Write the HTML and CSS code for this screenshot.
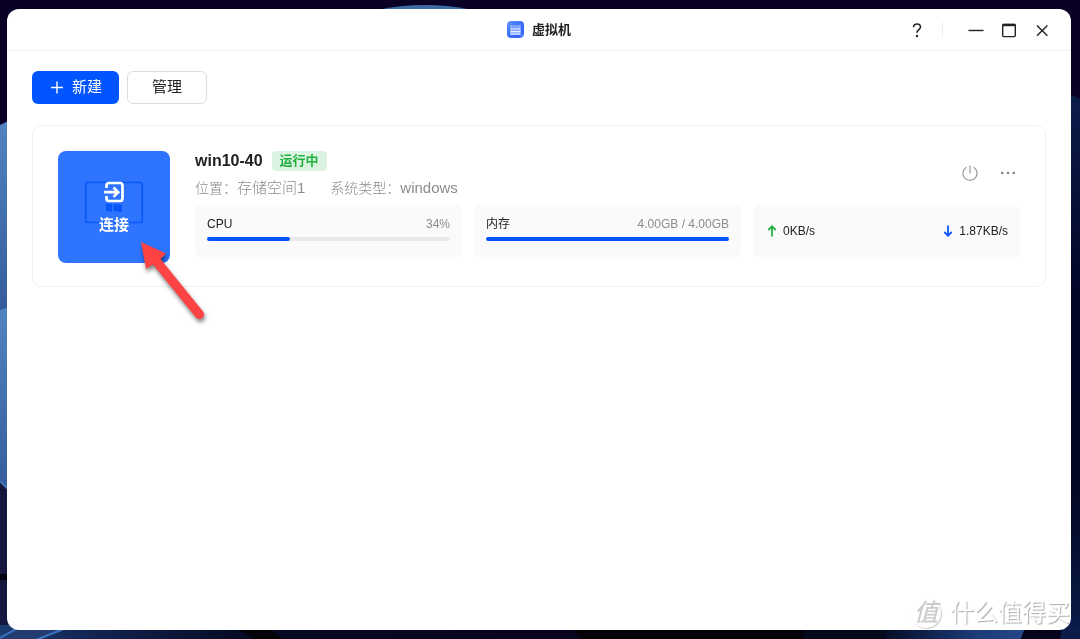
FILE: index.html
```html
<!DOCTYPE html>
<html lang="zh-CN">
<head>
<meta charset="utf-8">
<title>虚拟机</title>
<link rel="stylesheet" href="styles.css">
</head>
<body>
<svg class="wallpaper" viewBox="0 0 1080 639" preserveAspectRatio="none" aria-hidden="true">
  <defs>
    <linearGradient id="petal" x1="0" y1="0" x2="0" y2="1"><stop offset="0" stop-color="#5184c2"/><stop offset="1" stop-color="#355c9c"/></linearGradient>
    <linearGradient id="right" x1="0" y1="0" x2="0" y2="1"><stop offset="0" stop-color="#0c1c4a"/><stop offset=".35" stop-color="#02072a"/><stop offset=".7" stop-color="#020620"/><stop offset="1" stop-color="#0a1c4a"/></linearGradient>
    <linearGradient id="floor" x1="0" y1="0" x2="1" y2="0"><stop offset="0" stop-color="#1c3d70"/><stop offset=".1" stop-color="#122452"/><stop offset=".27" stop-color="#060b25"/><stop offset=".6" stop-color="#080320"/><stop offset=".8" stop-color="#04081c"/><stop offset="1" stop-color="#04081c"/></linearGradient>
    <linearGradient id="glow" x1="0" y1="0" x2="1" y2="0"><stop offset="0" stop-color="#050d28"/><stop offset=".65" stop-color="#1c3c78"/><stop offset="1" stop-color="#24478a"/></linearGradient>
  </defs>
  <rect width="1080" height="639" fill="#0a0026"/>
  <ellipse cx="425" cy="18" rx="58" ry="13" fill="#3d6ba5"/>
  <path d="M0 125L10 120V310H0z" fill="url(#petal)"/>
  <path d="M0 310L10 307V492L0 480z" fill="url(#petal)"/>
  <path d="M0 481L10 491V639H0z" fill="#15173f"/>
  <path d="M0 481L10 491" stroke="#4478bd" stroke-width="2"/>
  <path d="M0 574H10V580H0z" fill="#02020e"/>
  <path d="M1068 95Q1076 96 1080 99V639H1068z" fill="url(#right)"/>
  <rect y="625" width="886" height="14" fill="url(#floor)"/>
  <path d="M0 639L18 628H65L38 639z" fill="#233d70"/>
  <path d="M0 638L18 628M36 640L66 628" stroke="#3c74c5" stroke-width="2"/>
  <path d="M235 628H270L282 639H255zM572 628H804V639H582z" fill="#020208"/>
  <path d="M886 628H1025L1021 639H887z" fill="url(#glow)"/>
  <path d="M1025 628H1062L1060 639H1021z" fill="#05031c"/>
  <path d="M1062 628H1080V639H1060z" fill="#0b1c4b"/>
</svg>

<main class="window">
  <header class="titlebar">
    <h1 class="app-title">
      <svg width="17" height="17" viewBox="0 0 17 17" aria-hidden="true">
        <defs><linearGradient id="logo" x1="0" y1="0" x2="1" y2="1"><stop offset="0" stop-color="#6d9dff"/><stop offset=".3" stop-color="#437bf8"/><stop offset=".8" stop-color="#3563f5"/><stop offset="1" stop-color="#8caeff"/></linearGradient></defs>
        <rect width="17" height="17" rx="4" fill="url(#logo)"/>
        <rect x="4" y="4" width="9" height="9" fill="#7da3ff"/>
        <path d="M4 4v9.500M13 4v9.500" stroke="#a9c4ff"/>
        <path d="M3.500 8h10M3.500 10.600h10M3.500 13.200h10" stroke="#e8f0ff" stroke-width="1.200"/>
      </svg>
      <span>虚拟机</span>
    </h1>
    <div class="window-controls">
      <button class="control" aria-label="帮助"><svg width="16" height="18" viewBox="0 0 16 18"><path d="M4.500 6.300C4.500 4.100 5.800 3 8 3s3.500 1.200 3.500 3c0 2.500-3.500 2.800-3.500 5.700" stroke-width="1.600"/><circle cx="8" cy="15" r="1.200" class="dot"/></svg></button>
      <span class="divider"></span>
      <button class="control" aria-label="最小化"><svg width="16" height="18" viewBox="0 0 16 18"><path d="M.500 9.500h15" stroke-width="1.400"/></svg></button>
      <button class="control" aria-label="最大化"><svg width="16" height="18" viewBox="0 0 16 18"><rect x="1.700" y="3.400" width="12.600" height="12.200" rx="1" stroke-width="1.400"/><path d="M1.500 4h13" stroke-width="2.400"/></svg></button>
      <button class="control" aria-label="关闭"><svg width="16" height="18" viewBox="0 0 16 18"><path d="M3 4.400l10.400 10.400M13.400 4.400L3 14.800" stroke-width="1.400"/></svg></button>
    </div>
  </header>

  <div class="content">
    <div class="toolbar">
      <button class="btn btn-primary"><svg width="14" height="14" viewBox="0 0 14 14" aria-hidden="true"><path d="M1 7.500h12M7 1.500v12" stroke="#fff" stroke-width="1.400"/></svg>新建</button>
      <button class="btn btn-plain">管理</button>
    </div>

    <article class="card">
      <button class="connect">
        <svg class="connect-art" viewBox="0 0 112 112" aria-hidden="true">
          <rect x="27.800" y="31.500" width="56.500" height="40" rx="2" fill="none" stroke="#0959fa" stroke-width="1.700"/>
          <path d="M48 52.500l6 .500v7.500l-6-.500zM55.500 53l8.500.500v7.500l-8.500-1z" fill="#0758f7"/>
          <path d="M48.500 37V34.500q0-2.500 2.500-2.500h11q2.500 0 2.500 2.500v13q0 2.500-2.500 2.500H51q-2.500 0-2.500-2.500V45M46 41.200h13.500M55.500 36.500L60.200 41.200l-4.700 4.700" fill="none" stroke="#fff" stroke-width="2.700"/>
        </svg>
        <span class="connect-label">连接</span>
      </button>
      <div class="info">
        <div class="summary">
          <div class="identity">
            <div class="name-row"><h2 class="name">win10-40</h2><span class="badge">运行中</span></div>
            <div class="meta">
              <span><span class="meta-label">位置：</span>存储空间1</span>
              <span><span class="meta-label">系统类型：</span>windows</span>
            </div>
          </div>
          <div class="actions">
            <button class="control" aria-label="电源"><svg width="16" height="16" viewBox="0 0 16 16"><path d="M4.500 2.300A7 7 0 1 0 11.500 2.300M8 .500v8" stroke="#999" stroke-width="1.200"/></svg></button>
            <button class="control" aria-label="更多"><svg width="16" height="16" viewBox="0 0 16 16"><g fill="#858585" stroke="none"><circle cx="2.200" cy="8" r="1.300"/><circle cx="8" cy="8" r="1.300"/><circle cx="13.800" cy="8" r="1.300"/></g></svg></button>
          </div>
        </div>
        <div class="metrics">
          <section class="metric">
            <div class="metric-row"><span>CPU</span><span class="muted">34%</span></div>
            <div class="track"><div class="fill" style="width:34%"></div></div>
          </section>
          <section class="metric">
            <div class="metric-row"><span>内存</span><span class="muted">4.00GB / 4.00GB</span></div>
            <div class="track"><div class="fill" style="width:100%"></div></div>
          </section>
          <section class="metric network">
            <span class="rate"><svg width="10" height="12" viewBox="0 0 10 12" aria-hidden="true"><path d="M5 11.500V1.500M1.300 5L5 1.300 8.700 5" fill="none" stroke="#25b046" stroke-width="1.800"/></svg>0KB/s</span>
            <span class="rate"><svg width="10" height="12" viewBox="0 0 10 12" aria-hidden="true"><path d="M5 .500v10M1.300 7L5 10.700 8.700 7" fill="none" stroke="#0b55ff" stroke-width="1.800"/></svg>1.87KB/s</span>
          </section>
        </div>
      </div>
    </article>
  </div>
</main>

<svg class="pointer" width="80" height="96" viewBox="0 0 80 96" aria-hidden="true">
  <path d="M7 8L32 19.500 26.500 25 69 77.500a4.500 4.500 0 0 1-7 6L19 30.500l-7 4.500z" fill="#fd4343"/>
</svg>
<div class="watermark"><span class="watermark-seal">值</span><span>什么值得买</span></div>
</body>
</html>
```

FILE: styles.css
```css
* { box-sizing: border-box; }

body {
  margin: 0;
  min-height: 100vh;
  padding: 9px 9px 9px 7px;
  display: flex;
  background: #0a0026;
  color: #222;
  font-family: "Liberation Sans", "Noto Sans CJK SC", sans-serif;
  font-size: 12px;
}

button {
  margin: 0;
  padding: 0;
  border: 0;
  background: none;
  color: inherit;
  font: inherit;
  cursor: pointer;
}

svg { display: block; flex: none; }
h1, h2 { margin: 0; }

.wallpaper {
  position: fixed;
  inset: 0;
  width: 100%;
  height: 100%;
}

.window {
  position: relative;
  flex: 1;
  background: #fff;
  border-radius: 12px;
  overflow: hidden;
}

.titlebar {
  display: grid;
  grid-template-columns: 1fr auto 1fr;
  align-items: center;
  height: 42px;
  border-bottom: 1px solid #f1f1f1;
}

.app-title {
  grid-column: 2;
  display: flex;
  align-items: center;
  gap: 8px;
  font-size: 13px;
  line-height: 20px;
}

.window-controls {
  display: flex;
  justify-content: flex-end;
  align-items: center;
  gap: 17px;
  padding-right: 21px;
}

.control svg {
  fill: none;
  stroke: #222;
}

.control .dot { fill: #222; stroke: none; }

.divider {
  width: 1px;
  height: 16px;
  margin-right: 8px;
  background: #eee;
}

.content { padding: 20px 25px 24px; }

.toolbar {
  display: flex;
  gap: 8px;
  margin-bottom: 21px;
}

.btn {
  display: flex;
  align-items: center;
  justify-content: center;
  gap: 8px;
  height: 33px;
  border-radius: 6px;
  font-size: 15px;
  line-height: 20px;
}

.btn-primary { padding: 0 17px 2px 18px; background: #0055ff; color: #fff; }
.btn-plain { padding: 0 24px 2px; border: 1px solid #ddd; }

.card {
  display: flex;
  gap: 25px;
  padding: 25px 25px 23px;
  border: 1px solid #f1f1f1;
  border-radius: 9px;
}

.connect {
  display: grid;
  flex: none;
  width: 112px;
  height: 112px;
  border-radius: 8px;
  background: #2e74ff;
  color: #fff;
}

.connect-art, .connect-label { grid-area: 1 / 1; }
.connect-art { width: 100%; height: 100%; }

.connect-label {
  align-self: end;
  padding-bottom: 28px;
  font-size: 15px;
  font-weight: 700;
  line-height: 20px;
}

.info { flex: 1; min-width: 0; }

.summary {
  display: flex;
  justify-content: space-between;
  align-items: center;
  margin-bottom: 7px;
}

.name-row {
  display: flex;
  align-items: center;
  gap: 9px;
  margin-bottom: 7px;
}

.name { font-size: 16px; line-height: 20px; }

.badge {
  padding: 0 8px;
  border-radius: 4px;
  background: #dcf3e1;
  color: #22b23f;
  font-size: 13px;
  font-weight: 700;
  line-height: 20px;
}

.meta {
  display: flex;
  gap: 25px;
  color: #8c8c8c;
  font-size: 15px;
  font-weight: 300;
  line-height: 20px;
}

.meta-label { font-size: 14px; }

.actions { display: flex; gap: 22px; padding: 0 4px 3px 0; }

.metrics {
  display: grid;
  grid-template-columns: repeat(3, 1fr);
  gap: 12px;
}

.metric {
  height: 52px;
  padding: 11px 12px;
  border-radius: 6px;
  background: #fafafa;
}

.metric-row {
  display: flex;
  justify-content: space-between;
  line-height: 16px;
  margin-bottom: 5px;
}

.muted { color: #8c8c8c; }

.track {
  height: 4px;
  border-radius: 2px;
  background: #e9e9e9;
}

.fill { height: 100%; border-radius: 2px; background: #0055ff; }

.network, .rate { display: flex; align-items: center; }
.network { justify-content: space-between; padding-left: 14px; }
.rate { gap: 6px; }

.pointer {
  position: absolute;
  left: 134px;
  top: 234px;
  filter: drop-shadow(1px 3px 2px rgba(0, 0, 0, 0.5));
  pointer-events: none;
}

.watermark {
  position: fixed;
  right: 10px;
  bottom: 10px;
  display: flex;
  align-items: center;
  gap: 9px;
  color: #fff;
  font-size: 24px;
  line-height: 32px;
  text-shadow: 1px 1px 1px #aaa;
  pointer-events: none;
}

.watermark-seal {
  width: 30px;
  height: 30px;
  border-radius: 50%;
  box-shadow: 1px 1px 1px #ccc;
  color: #ccc;
  font-style: italic;
  font-weight: 500;
  line-height: 30px;
  text-align: center;
  text-shadow: none;
}
```
